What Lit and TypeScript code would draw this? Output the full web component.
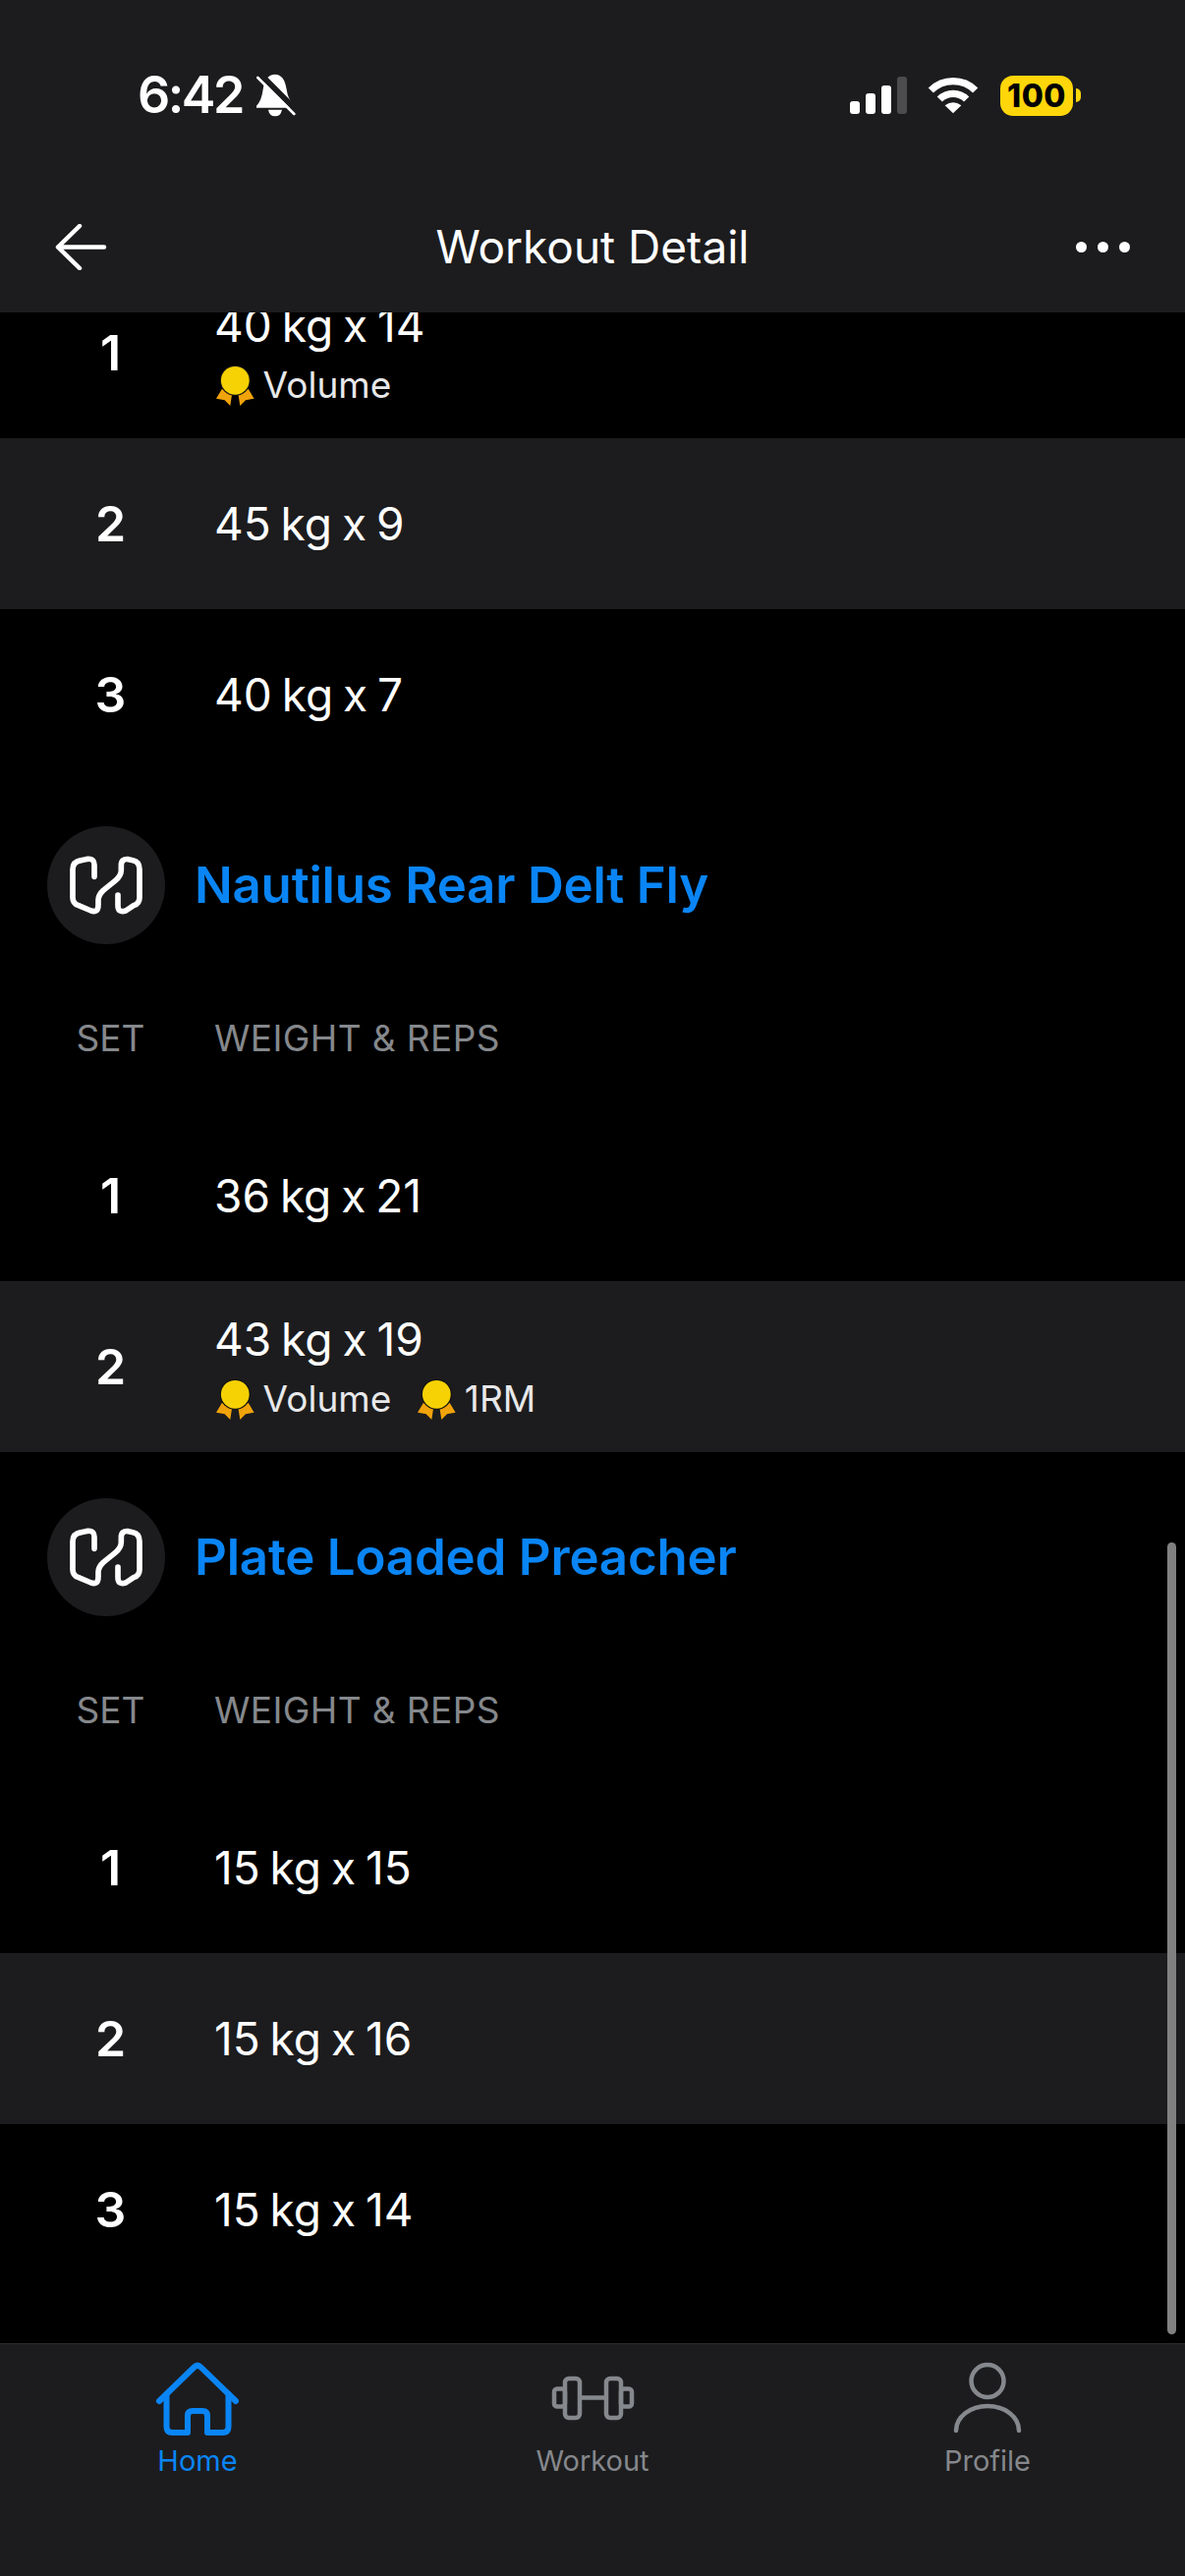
import { LitElement, css, html, svg } from "lit";
import { customElement } from "lit/decorators.js";

type Medal = "Volume" | "1RM";
interface SetRow {
  n: number;
  value: string;
  medals?: Medal[];
}
interface Exercise {
  name?: string;
  sets: SetRow[];
}

const EXERCISES: Exercise[] = [
  {
    sets: [
      { n: 1, value: "40 kg x 14", medals: ["Volume"] },
      { n: 2, value: "45 kg x 9" },
      { n: 3, value: "40 kg x 7" },
    ],
  },
  {
    name: "Nautilus Rear Delt Fly",
    sets: [
      { n: 1, value: "36 kg x 21" },
      { n: 2, value: "43 kg x 19", medals: ["Volume", "1RM"] },
    ],
  },
  {
    name: "Plate Loaded Preacher",
    sets: [
      { n: 1, value: "15 kg x 15" },
      { n: 2, value: "15 kg x 16" },
      { n: 3, value: "15 kg x 14" },
    ],
  },
];

const medalIcon = svg`<svg class="medal" viewBox="10.7 13 38.6 41">
  <polygon fill="#f0a30a" points="16.7,36.7 26.7,43 25,54 19.3,48.3 10.7,46.7" />
  <polygon fill="#f0a30a" points="43.3,36.7 33.3,43 35,54 40.7,48.3 49.3,46.7" />
  <circle cx="30" cy="28.3" r="15.6" fill="#111" />
  <circle cx="30" cy="28.3" r="14.4" fill="#f6d104" />
</svg>`;

const machineIcon = svg`<svg class="machine" viewBox="0 0 288 252" fill="none" stroke="#fff" stroke-width="17" stroke-linecap="round" stroke-linejoin="round">
  <path d="M108 100 V64 Q108 44 88 46 L68 50 Q42 54 42 78 V164 Q42 182 60 188 L98 204 Q120 212 120 186 V172 Q120 156 135 142 L172 112 Q190 97 190 80 V66 Q190 44 212 47 L226 50 Q246 54 246 78 V164 Q246 182 228 188 L204 204 Q180 212 180 188 V156" />
</svg>`;

const homeIcon = svg`<svg viewBox="-4 0 130 96" fill="none" stroke="currentColor" stroke-width="6" stroke-linecap="round" stroke-linejoin="round">
  <path d="M22 54 L57.5 19.5 Q61 16 64.5 19.5 L100 54" />
  <path d="M29.5 47 V80 Q29.5 86 35.5 86 H51 V69 Q51 64 56 64 H66 Q71 64 71 69 V86 H86.5 Q92.5 86 92.5 80 V47" />
</svg>`;

const dumbbellIcon = svg`<svg viewBox="-2 0 130 96" fill="none" stroke="currentColor" stroke-width="4.5">
  <rect x="24" y="41.5" width="11" height="18" rx="3" />
  <rect x="35" y="31" width="15" height="40" rx="4" />
  <rect x="77" y="31" width="15" height="40" rx="4" />
  <rect x="92" y="41.5" width="11" height="18" rx="3" />
  <path d="M50 50.5 H77" />
</svg>`;

const profileIcon = svg`<svg viewBox="0 0 130 96" fill="none" stroke="currentColor" stroke-width="4.5" stroke-linecap="round">
  <circle cx="65" cy="33.5" r="16.5" />
  <path d="M33 84 A32 25 0 0 1 97 84" />
</svg>`;

@customElement("app-root")
export class AppRoot extends LitElement {
  static styles = css`
    :host {
      display: flex;
      flex-direction: column;
      width: 1206px;
      height: 2622px;
      overflow: hidden;
      background: #000;
      color: #fff;
      font-family: Inter, "Liberation Sans", sans-serif;
    }

    .top {
      background: #1c1c1e;
      flex: none;
    }

    .status {
      height: 194px;
      display: flex;
      align-items: center;
      justify-content: space-between;
      padding: 0 106px 0 140px;
      box-sizing: border-box;
    }

    .status-left,
    .status-right {
      display: flex;
      align-items: center;
    }

    .time {
      font-size: 52px;
      font-weight: 600;
      line-height: 60px;
      letter-spacing: -2.5px;
      margin-right: 14px;
    }

    .bell {
      width: 40px;
      height: 44px;
    }

    .signal {
      width: 58px;
      height: 38px;
      margin-right: 22px;
    }

    .wifi {
      width: 51px;
      height: 38px;
      margin-right: 22px;
    }

    .battery {
      display: flex;
      align-items: center;
      gap: 3px;
    }

    .battery-body {
      width: 74px;
      height: 41px;
      border-radius: 13px;
      background: #ffd60a;
      color: #000;
      font-size: 32px;
      font-weight: 800;
      letter-spacing: 0.5px;
      display: flex;
      align-items: center;
      justify-content: center;
    }

    .battery-tip {
      width: 5px;
      height: 14px;
      border-radius: 0 5px 5px 0;
      background: #ffd60a;
    }

    .nav {
      height: 114px;
      padding: 0 56px 10px;
      display: grid;
      grid-template-columns: 1fr auto 1fr;
      align-items: center;
    }

    .back {
      width: 54px;
      height: 47px;
    }

    .title {
      font-size: 46px;
      font-weight: 400;
      line-height: 56px;
    }

    .dots {
      justify-self: end;
      display: flex;
      gap: 11px;
    }

    .dots span {
      width: 11px;
      height: 11px;
      border-radius: 50%;
      background: #fff;
    }

    main {
      flex: 1;
      min-height: 0;
      position: relative;
      overflow: hidden;
    }

    .list {
      margin-top: -46px;
    }

    .exercise-head {
      display: flex;
      align-items: center;
      gap: 30px;
      padding: 47px 0 0 48px;
    }

    .thumb {
      width: 120px;
      height: 120px;
      border-radius: 50%;
      background: #1c1c1e;
      display: flex;
      align-items: center;
      justify-content: center;
    }

    .machine {
      width: 96px;
      height: 84px;
    }

    .name {
      font-size: 51px;
      font-weight: 600;
      letter-spacing: -0.2px;
      color: #0a85f5;
      line-height: 64px;
    }

    .cols,
    .row {
      display: grid;
      grid-template-columns: 211px 1fr;
      padding-left: 7px;
      align-items: center;
    }

    .cols {
      height: 148px;
      margin-top: 21px;
      font-size: 37px;
      color: #85888c;
    }

    .cols span:last-child {
      letter-spacing: 0.4px;
    }

    .cols span:first-child,
    .num {
      text-align: center;
    }

    .row {
      height: 174px;
    }

    .row.alt {
      background: #1c1c1e;
    }

    .num {
      font-size: 50px;
      font-weight: 600;
    }

    .value {
      font-size: 46px;
      line-height: 60px;
      word-spacing: -3px;
    }

    .medals {
      display: flex;
      align-items: center;
      gap: 27px;
      margin: 6px 0 0 2px;
    }

    .badge {
      display: flex;
      align-items: center;
      gap: 9px;
      font-size: 37px;
      line-height: 50px;
      color: #e8e8ea;
    }

    .medal {
      width: 38.6px;
      height: 41px;
    }

    .scrollbar {
      position: absolute;
      right: 9px;
      top: 1252px;
      width: 9px;
      height: 806px;
      border-radius: 5px;
      background: #808080;
    }

    footer {
      flex: none;
      height: 237px;
      box-sizing: border-box;
      border-top: 1px solid #2c2c2e;
      background: #1c1c1e;
      padding-top: 4px;
      display: grid;
      grid-template-columns: repeat(3, 402px);
      align-items: start;
      color: #85888c;
    }

    .tab {
      display: flex;
      flex-direction: column;
      align-items: center;
      font-size: 29px;
      line-height: 38px;
    }

    .tab.active {
      color: #0a85f5;
    }

    .tab svg {
      width: 130px;
      height: 96px;
    }
  `;

  private renderStatus() {
    return html`<div class="status">
      <div class="status-left">
        <span class="time">6:42</span>
        <svg class="bell" viewBox="430 48 120 132">
          <path fill="#fff" d="M487 50 Q515 50 522 96 Q526 128 546 146 V152 H430 V146 Q446 130 450 96 Q456 50 487 50 Z" />
          <path fill="#fff" d="M466 158 H508 Q504 178 487 178 Q470 178 466 158 Z" />
          <path stroke="#1c1c1e" stroke-width="18" d="M442 50 L556 164" />
          <path stroke="#fff" stroke-width="8" stroke-linecap="round" d="M434 60 L545 171" />
        </svg>
      </div>
      <div class="status-right">
        <svg class="signal" viewBox="0 0 58 38">
          <rect x="0" y="25" width="10" height="13" rx="3" fill="#fff" />
          <rect x="16" y="17" width="10" height="21" rx="3" fill="#fff" />
          <rect x="32" y="9" width="10" height="29" rx="3" fill="#fff" />
          <rect x="48" y="0" width="10" height="38" rx="3" fill="#4c4c4e" />
        </svg>
        <svg class="wifi" viewBox="315 55 153 114" fill="none" stroke="#fff" stroke-width="22">
          <path d="M322 97 A96 96 0 0 1 458 97" />
          <path d="M349 124 A58 58 0 0 1 431 124" />
          <path fill="#fff" stroke="none" d="M390 167 L365 143 Q390 125 415 143 Z" />
        </svg>
        <div class="battery">
          <div class="battery-body">100</div>
          <div class="battery-tip"></div>
        </div>
      </div>
    </div>`;
  }

  private renderNav() {
    return html`<div class="nav">
      <svg class="back" viewBox="0 0 54 47" fill="none" stroke="#fff" stroke-width="4.5" stroke-linecap="round" stroke-linejoin="round">
        <path d="M25 2 L3 23.5 L25 45 M3 23.5 H50" />
      </svg>
      <span class="title">Workout Detail</span>
      <div class="dots"><span></span><span></span><span></span></div>
    </div>`;
  }

  private renderExercise(ex: Exercise) {
    return html`
      ${ex.name
        ? html`<div class="exercise-head">
              <div class="thumb">${machineIcon}</div>
              <span class="name">${ex.name}</span>
            </div>
            <div class="cols"><span>SET</span><span>WEIGHT &amp; REPS</span></div>`
        : ""}
      ${ex.sets.map(
        (s) => html`<div class="row ${s.n % 2 === 0 ? "alt" : ""}">
          <span class="num">${s.n}</span>
          <div>
            <div class="value">${s.value}</div>
            ${s.medals
              ? html`<div class="medals">
                  ${s.medals.map((m) => html`<span class="badge">${medalIcon}${m}</span>`)}
                </div>`
              : ""}
          </div>
        </div>`
      )}
    `;
  }

  render() {
    return html`
      <div class="top">${this.renderStatus()}${this.renderNav()}</div>
      <main>
        <div class="list">${EXERCISES.map((ex) => this.renderExercise(ex))}</div>
        <div class="scrollbar"></div>
      </main>
      <footer>
        <div class="tab active">${homeIcon}<span>Home</span></div>
        <div class="tab">${dumbbellIcon}<span>Workout</span></div>
        <div class="tab">${profileIcon}<span>Profile</span></div>
      </footer>
    `;
  }
}
